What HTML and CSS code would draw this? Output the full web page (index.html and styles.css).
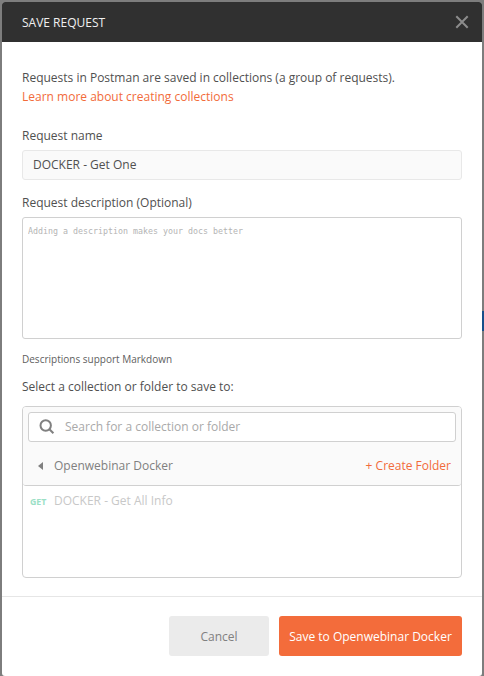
FILE: index.html
```html
<!DOCTYPE html>
<html lang="en">
<head>
<meta charset="utf-8">
<title>Save Request</title>
<link rel="stylesheet" href="styles.css">
</head>
<body>
<div class="page-accent"></div>
<main class="modal">
  <header class="modal-header">
    <h1>SAVE REQUEST</h1>
    <svg class="close" width="14" height="14" viewBox="0 0 14 14"><path d="M1.3 1.3 12.7 12.7M12.7 1.3 1.3 12.7"/></svg>
  </header>
  <section class="modal-body">
    <p class="intro"><span class="intro-text">Requests in Postman are saved in collections (a group of requests).</span><br><a class="learn">Learn more about creating collections</a></p>
    <div class="label label-name"><span>Request name</span></div>
    <div class="name-input"><span>DOCKER - Get One</span></div>
    <div class="label label-desc"><span>Request description (Optional)</span></div>
    <div class="desc-input"><span>Adding a description makes your docs better</span></div>
    <div class="hint"><span>Descriptions support Markdown</span></div>
    <div class="label label-select"><span>Select a collection or folder to save to:</span></div>
    <div class="picker">
      <div class="picker-head">
        <div class="search">
          <svg width="16" height="16" viewBox="0 0 16 16"><circle cx="6.7" cy="6.5" r="5.2"/><path d="M10.4 10.3 14.4 14.3"/></svg>
          <span>Search for a collection or folder</span>
        </div>
        <div class="crumb">
          <svg width="5" height="8" viewBox="0 0 5 8"><path d="M5 0V8L0 4Z"/></svg>
          <span class="crumb-name">Openwebinar Docker</span>
          <a class="create">+ Create Folder</a>
        </div>
      </div>
      <div class="item"><b>GET</b><span>DOCKER - Get All Info</span></div>
    </div>
  </section>
  <footer class="modal-footer">
    <div class="btn cancel"><span>Cancel</span></div>
    <div class="btn save"><span>Save to Openwebinar Docker</span></div>
  </footer>
</main>
</body>
</html>
```
FILE: styles.css
```css
* { box-sizing: border-box; }
body {
  margin: 0;
  height: 676px;
  padding: 2px 2px 0;
  overflow: hidden;
  background: #7d7d7d;
  font: 12px/18px "Open Sans", sans-serif;
  color: #505050;
}
.page-accent {
  position: absolute;
  right: 0;
  top: 311px;
  width: 2px;
  height: 20px;
  background: #174f8a;
}
.modal {
  height: 674px;
  display: flex;
  flex-direction: column;
  background: #fff;
  border-radius: 3px;
  overflow: hidden;
}
.modal-header {
  height: 40px;
  padding: 0 13px 0 20px;
  display: flex;
  align-items: center;
  justify-content: space-between;
  background: #303030;
}
h1 { margin: 0; padding-top: 2px; font-size: 12px; font-weight: 400; color: #f0f0f0; }
.close { fill: none; stroke: #8c8c8c; stroke-width: 2; }
.modal-body { height: 554px; padding: 26px 20px 0; }
.intro { margin: 0; line-height: 19px; }
.learn, .create { color: #f26b3a; }
.label { line-height: 18px; }
.label-name { margin-top: 21px; }
.name-input {
  height: 30px;
  margin-top: 5px;
  padding: 0 10px;
  border: 1px solid #e8e8e8;
  border-radius: 3px;
  background: #fafafa;
  line-height: 28px;
}
.label-desc { margin-top: 14px; }
.desc-input {
  height: 122px;
  margin-top: 5px;
  padding: 5px;
  border: 1px solid #d0d0d0;
  border-radius: 3px;
  font: 9.5px/16px "DejaVu Sans Mono", monospace;
  color: #b4b4b4;
}
.desc-input span {
  display: inline-block;
  white-space: nowrap;
  transform: scaleX(.874);
  transform-origin: left;
}
.hint { margin-top: 13px; font-size: 10px; line-height: 14px; color: #606060; }
.label-select { margin-top: 12px; }
.picker {
  height: 172px;
  margin-top: 10px;
  border: 1px solid #d0d0d0;
  border-radius: 4px;
}
.picker-head {
  height: 79px;
  padding: 5px 5px 0;
  border-bottom: 1px solid #d0d0d0;
  border-radius: 3px;
  background: #fafafa;
}
.search {
  height: 30px;
  padding: 0 10px;
  display: flex;
  align-items: center;
  gap: 10px;
  border: 1px solid #d0d0d0;
  border-radius: 3px;
  background: #fff;
  color: #a9a9a9;
}
.search svg { fill: none; stroke: #808080; stroke-width: 2; }
.crumb {
  height: 48px;
  padding: 0 5px 0 10px;
  display: flex;
  align-items: center;
  color: #808080;
}
.crumb svg { fill: #808080; }
.crumb-name { margin-left: 11px; }
.create { margin-left: auto; }
.item {
  height: 30px;
  padding-left: 7px;
  display: flex;
  align-items: center;
  color: #c8c8c8;
}
.item b { width: 24px; font-size: 8.8px; color: #9be0c6; padding-top: 1px; }
.modal-footer {
  height: 80px;
  padding: 19px 20px 0;
  display: flex;
  justify-content: flex-end;
  gap: 10px;
  border-top: 1px solid #e6e6e6;
}
.btn {
  height: 40px;
  border-radius: 3px;
  line-height: 42px;
  text-align: center;
}
.cancel { width: 100px; background: #ebebeb; color: #808080; }
.save { width: 183px; background: #f36c3b; color: #fff; }
```
